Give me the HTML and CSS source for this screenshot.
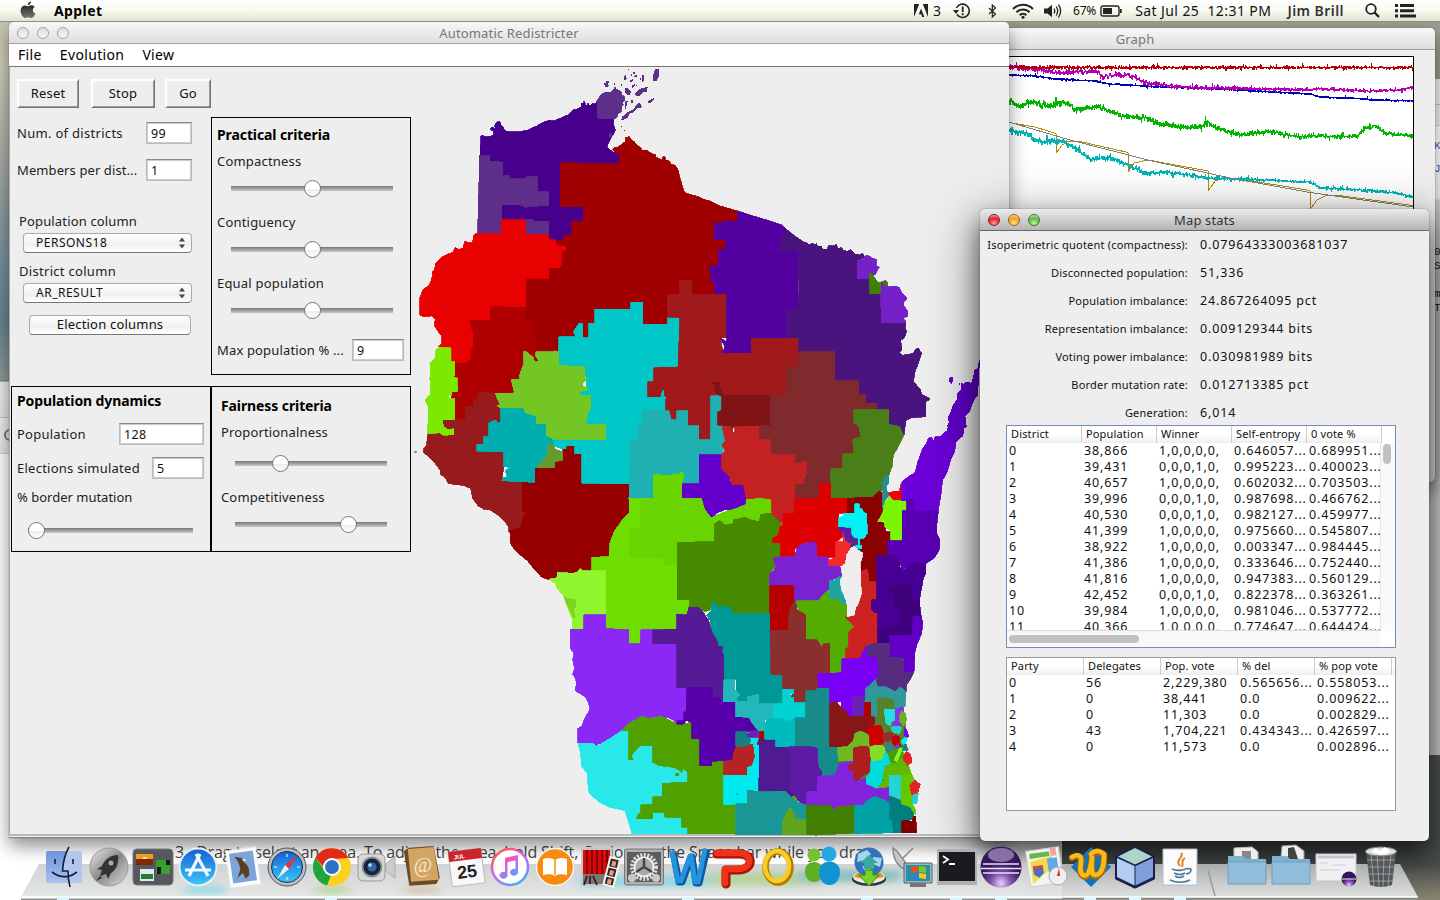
FILE: index.html
```html
<!DOCTYPE html>
<html lang="en">
<head>
<meta charset="utf-8">
<title>Applet</title>
<link rel="stylesheet" href="styles.css">
</head>
<body>
<div class="desktop">
  <div class="back-left"><i class="knob-ring"></i></div>
  <div class="back-doc">3.&nbsp; Drag to select an area. To adjust the area, hold Shift, Option, or the Space bar while you drag</div>
  <div class="back-right"><span class="b1">K</span><span class="b1">J</span><span class="b2">0</span><span class="b3">S</span><span class="b4">m</span><span class="b5">T</span></div>

  <section class="window graph-window">
    <header class="titlebar idle">Graph</header>
    <svg class="graph" id="graph" viewBox="1000 56 414 400" width="414" height="400"></svg>
  </section>

  <section class="window applet">
    <header class="titlebar idle"><span class="lights"><i></i><i></i><i></i></span>Automatic Redistricter</header>
    <nav class="menu"><span>File</span><span>Evolution</span><span>View</span></nav>
    <div class="canvas">
      <div class="controls">
        <div class="toolbar"><b class="reset">Reset</b><b class="stop">Stop</b><b class="go">Go</b></div>
        <div class="panels">
          <div class="setup">
            <div class="row"><label>Num. of districts</label><span class="field w46">99</span></div>
            <div class="row second"><label>Members per dist...</label><span class="field w46">1</span></div>
            <label class="collabel first">Population column</label>
            <div class="select">PERSONS18<svg width="6" height="12" viewBox="0 0 6 12"><path d="M0 4.500L3 .5l3 4zM0 7.500l3 4 3-4z" fill="#444"/></svg></div>
            <label class="collabel">District column</label>
            <div class="select">AR_RESULT<svg width="6" height="12" viewBox="0 0 6 12"><path d="M0 4.500L3 .5l3 4zM0 7.500l3 4 3-4z" fill="#444"/></svg></div>
            <div class="push">Election columns</div>
          </div>
          <div class="panel practical">
            <h3>Practical criteria</h3>
            <div class="group"><label>Compactness</label><div class="slider"><i style="left:50%"></i></div></div>
            <div class="group"><label>Contiguency</label><div class="slider"><i style="left:50%"></i></div></div>
            <div class="group"><label>Equal population</label><div class="slider"><i style="left:50%"></i></div></div>
            <div class="row max"><label>Max population % ...</label><span class="field w52">9</span></div>
          </div>
          <div class="panel dynamics">
            <h3>Population dynamics</h3>
            <div class="row"><label>Population</label><span class="field w85">128</span></div>
            <div class="row"><label>Elections simulated</label><span class="field w52">5</span></div>
            <label class="lbl">% border mutation</label>
            <div class="slider"><i style="left:5%"></i></div>
          </div>
          <div class="panel fairness">
            <h3>Fairness criteria</h3>
            <label class="l1">Proportionalness</label>
            <div class="slider"><i style="left:30%"></i></div>
            <label class="l2">Competitiveness</label>
            <div class="slider s2"><i style="left:74.500%"></i></div>
          </div>
        </div>
      </div>
      <svg class="map" id="map" viewBox="411 67 597 769" width="597" height="769" shape-rendering="crispEdges">
        <!-- north-west counties -->
        <g transform="translate(410 60) scale(.33333)">
          <polygon fill="#46008b" points="213,227 222,227 226,231 240,229 250,225 252,214 240,208 246,202 256,205 254,196 262,185 270,186 274,196 280,200 282,208 290,214 320,216 352,211 380,198 405,184 420,181 430,183 450,175 470,166 475,165 490,150 500,147 515,140 513,130 522,130 522,122 528,138 534,130 540,138 548,130 555,132 562,122 562,177 612,177 610,190 616,212 604,232 600,240 590,262 604,272 612,278 630,270 630,320 453,320 453,441 522,441 522,484 486,484 486,527 462,527 462,543 417,543 417,484 274,484 274,521 205,521 205,480 210,287"/>
          <polygon fill="#5e2e8b" points="210,288 240,288 240,303 279,307 279,348 300,348 300,356 348,356 348,351 384,351 384,396 417,396 417,437 352,439 348,444 342,439 330,435 276,435 276,480 274,521 204,521 204,478 207,478 207,366 210,366"/>
          <polygon fill="#5e2e8b" points="346,480 372,480 372,484 417,484 417,525 346,525"/>
          <polygon fill="#5e2e8b" points="562,122 572,104 585,97 605,96 615,82 618,88 630,93 636,99 634,106 642,108 645,120 637,128 640,135 635,140 634,155 625,160 620,172 613,177 575,177 562,172"/>
          <path fill="#5e2e8b" d="M582 70l6-2 2-6h8v6l-4 4 4 6-12 4zM730 42l6-14h11v20l-8 16h-10zM675 100l10-10 10-6 18-3-2 14-14 3-6 8-12 3zM644 85l8-3 12 14-6 10-10-3-4-8zM636 170l10-6 8-8 14-6 12-16 6-6 8 8 2 6-14 2-14 14-8 2-6 12-14 8h-6zM714 122l8-2 8-6 2 4-10 10-8 2zM645 125l9-4-4 16-3 10h-3zM642 48l6-2 2 12-6 6zM654 26h3v4h-3zM662 46l4-6v8zM670 36h5v6h-5zM672 48l8-4v6l-8 2zM697 46l6-2v12l-4 10h-2zM658 62l10-4v6l-8 4zM666 76l8-4v4l-8 10zM678 74h4v4h-4zM688 56l4-2v6zM612 70h3v4h-3zM634 72h3v6h-3zM716 68h2v5h-2zM662 120h6v10h-6zM596 220l10-2v10l-8 6z"/>
          <path fill="#a00000" d="M633 198h3v3h-3zM642 210h3v3h-3z"/>
          <polygon fill="#a00000" points="453,309 505,309 505,311 630,311 630,272 618,282 608,268 614,262 622,262 640,249 648,245 648,236 644,230 652,234 657,229 663,236 664,242 670,242 682,256 690,262 698,271 712,270 718,276 730,282 738,284 738,292 752,298 754,304 758,290 766,290 766,300 778,302 782,312 796,316 806,334 808,348 814,366 818,382 824,398 842,404 865,410 882,418 900,423 930,438 983,453 983,485 983,720 846,720 846,950 700,950 300,950 300,900 346,741 346,655 417,655 417,540 435,543 462,543 462,527 486,527 486,484 522,484 522,441 453,441"/>
          <polygon fill="#ae0000" points="177,780 240,780 240,738 287,738 287,741 346,741 346,784 360,786 366,815 378,828 380,890 340,950 320,1010 160,1090 120,1090 130,900 180,900"/>
          <polygon fill="#e90000" points="195,521 274,521 274,480 346,480 346,525 417,525 417,540 435,540 440,555 462,559 468,558 466,572 455,573 453,595 456,610 450,622 438,624 417,622 417,655 348,655 346,741 287,741 287,738 240,738 240,780 177,780 183,810 188,815 188,858 182,870 183,895 174,896 170,908 125,906 125,866 86,860 95,850 96,830 85,815 75,800 73,785 78,780 65,768 40,770 30,765 30,712 38,690 58,675 62,665 68,645 66,636 74,630 76,612 84,602 96,590 115,582 130,576 136,562 145,568 158,566 165,543 175,548 188,548 190,530"/>
        </g>
        <!-- west and centre -->
        <g transform="translate(410 330) scale(.33333)">
          <polygon fill="#00c6c8" points="400,300 880,300 860,440 660,460 520,450 515,372 420,345"/>
          <polygon fill="#971a1c" points="53,312 102,290 98,270 168,270 168,230 192,228 192,210 205,205 205,186 255,190 272,235 272,278 240,278 282,365 282,410 275,450 339,457 339,545 352,545 348,555 340,560 335,588 297,606 295,590 285,575 270,560 240,540 220,537 205,528 188,506 182,475 160,466 130,463 115,460 105,442 92,434 90,420 75,400 58,383 40,366 42,355 50,345"/>
          <polygon fill="#7bea00" points="90,52 123,54 123,96 134,96 134,135 128,139 142,145 143,184 125,185 126,195 112,196 120,205 134,207 134,268 98,270 98,278 102,290 115,299 131,296 131,314 98,316 90,308 53,312 52,290 55,280 55,230 46,212 50,203 60,195 62,155 57,145 62,140 60,100 70,90 78,80 78,60"/>
          <polygon fill="#960000" points="375,412 435,412 435,392 458,390 458,358 470,358 470,348 495,348 495,372 519,372 519,460 658,462 658,548 640,565 632,580 612,605 600,640 600,670 594,682 546,682 546,725 505,732 441,732 436,748 415,748 395,742 380,725 365,708 352,692 325,670 305,648 300,632 302,615 297,602 333,592 340,560 352,543 339,545 339,457 375,457"/>
          <polygon fill="#00c6c8" points="555,-63 663,-63 663,-84 699,-84 699,-18 774,-18 774,-39 810,-39 810,95 804,111 732,113 732,156 714,156 714,200 745,202 760,180 767,200 770,243 697,243 697,285 660,330 660,462 585,462 585,460 516,460 516,372 495,372 495,348 470,348 458,358 430,345 430,329 588,329 588,285 525,285 530,245 542,238 542,197 508,195 508,183 530,180 525,110 447,107 447,21 497,20 490,5 505,-18 519,-20 519,23 537,23 537,-20 555,-20"/>
          <polygon fill="#73c623" points="342,64 350,66 370,82 374,95 386,94 378,80 378,66 430,66 432,62 447,66 447,107 525,110 524,135 532,145 518,160 518,170 532,172 530,182 508,184 510,195 542,197 542,238 533,245 530,275 524,285 588,285 588,329 415,327 408,315 408,283 378,283 378,262 352,255 342,240 272,235 262,228 270,222 255,190 310,190 313,186 306,160 306,148 330,148 328,136 342,100"/>
          <polygon fill="#00aeb0" points="272,235 340,237 345,250 378,260 378,283 408,283 408,318 430,330 430,345 413,345 410,375 385,410 375,412 375,457 275,452 278,444 292,440 286,422 302,412 282,410 282,366 201,363 201,343 220,343 220,320 237,320 237,278 258,270 260,278 272,278"/>
          <polygon fill="#669a30" points="415,343 430,343 435,358 458,365 458,390 435,395 435,413 383,413 388,400 412,375"/>
          <polygon fill="#a01a1c" points="774,-108 810,-108 810,-150 846,-150 846,-108 951,-108 951,24 930,24 940,68 1023,68 1023,24 1167,24 1167,112 1131,112 1131,197 936,197 903,197 903,330 867,330 867,288 833,288 833,243 801,243 801,270 783,270 767,243 767,200 714,200 714,156 732,156 732,113 804,111 810,-39 774,-39"/>
          <path fill="#00c6c8" d="M753 202v-10l6-12h3v16l5 4v6h-14z"/>
          <polygon fill="#1fb0b1" points="697,243 778,243 783,270 801,270 801,243 833,243 833,288 867,288 867,330 903,330 903,198 936,198 936,243 924,245 924,285 936,288 948,330 936,375 867,375 867,461 817,461 817,430 765,438 730,432 730,507 657,505 660,330 685,330 685,285 697,285"/>
          <polygon fill="#6edd00" points="657,505 730,507 730,432 750,434 765,438 808,432 812,427 822,430 817,461 817,504 876,504 880,530 905,562 960,540 1005,525 1010,505 1050,503 1085,508 1085,551 1050,553 1048,575 1005,562 970,583 915,580 912,635 801,637 801,780 837,790 837,850 801,855 801,897 693,900 693,941 657,941 657,900 588,897 588,723 546,722 546,682 597,680 600,640 612,605 640,565 658,548"/>
          <polygon fill="#68d400" points="693,512 720,512 730,507 730,432 750,434 765,438 808,432 812,427 822,430 817,461 817,504 876,504 880,530 905,562 960,540 1005,525 1010,505 1050,503 1085,508 1085,551 1050,553 1048,575 1005,562 970,583 915,580 912,635 801,637 801,705 765,705 765,685 745,682 660,682 657,595 693,595"/>
        </g>
        <!-- north-east -->
        <g transform="translate(700 180) scale(.33333)">
          <polygon fill="#5200a0" points="113,93 130,98 160,108 200,120 245,135 262,150 245,190 235,212 294,212 294,340 297,345 297,385 261,388 261,474 153,474 153,518 66,518 75,500 58,472 78,484 81,474 81,342 45,342 45,303 28,300 38,278 28,275 30,260 57,255 55,210 75,208 77,180 45,180 42,130 65,128 85,120 90,125 113,125"/>
          <path fill="#a00000" d="M60 182h16v26h-8l-8-12z"/>
          <polygon fill="#4a147e" points="262,150 285,168 310,185 322,190 330,196 335,188 345,195 350,190 352,200 364,198 368,208 382,208 386,196 406,198 408,192 414,206 424,202 430,210 442,214 452,208 465,222 480,225 486,220 495,230 472,245 472,297 510,297 510,342 543,342 546,429 618,429 615,445 620,455 612,475 602,480 606,510 598,518 608,526 640,520 645,510 654,503 665,520 655,550 645,575 640,605 662,628 664,642 690,655 686,662 678,664 678,710 632,714 618,722 615,740 612,765 604,755 600,740 567,733 567,690 531,690 531,670 498,670 498,645 477,645 477,603 405,603 405,516 297,516 297,474 261,474 261,388 297,385 294,212 235,212 245,195 245,175"/>
          <polygon fill="#7520c8" points="472,243 482,238 490,240 494,228 508,227 516,235 530,238 528,256 538,262 530,275 525,285 508,280 508,297 472,297"/>
          <polygon fill="#7520c8" points="543,305 554,305 556,316 570,320 580,318 598,322 605,338 622,355 612,365 612,378 624,395 624,408 610,414 618,425 615,429 546,429 543,380"/>
          <polygon fill="#408000" points="507,282 514,278 525,295 535,308 545,308 556,300 563,308 563,317 555,316 551,305 543,310 543,342 510,342"/>
          <polygon fill="#801414" points="66,648 213,648 213,738 136,738 130,742 100,740 96,752 103,762 92,758 90,742 66,736 54,735 54,695 66,690"/>
          <path fill="#801414" d="M33 606h26v14l10 14v14h-12l-12-12v-18l-12-8z"/>
          <polygon fill="#7f2a2c" points="297,516 405,516 405,603 477,603 477,645 498,645 498,670 531,670 531,690 462,690 464,706 472,710 482,770 457,780 462,820 429,822 429,867 393,867 393,912 358,912 358,955 285,955 285,912 312,910 320,845 285,850 285,825 213,825 213,780 177,780 177,738 213,738 213,648 261,648 261,562 297,562"/>
          <polygon fill="#4a7f17" points="462,690 567,690 567,733 600,740 604,755 612,765 600,790 592,805 580,825 576,860 567,885 567,888 548,912 548,930 530,940 520,955 488,957 442,953 393,953 393,867 429,867 429,822 462,822 462,800 457,780 466,775 482,772 478,740 462,730"/>
          <path fill="#6200cc" d="M840 538l-6 14v12l-12 6-2 20-6 18-16-2-6 6-8-4-2 20-10 12-2 18-12 18-6 18-8 16 2 18-6 30 6 30 16 12 12-20 16-12 2-22 8-6-4-32 14-12 6-20 8-18 10-10zM747 594l6-4 2 2 2-4 2 16-4 8-8-6zM776 610h3v5h-3zM742 736h3v4h-3z"/>
        </g>
        <!-- Winnebago and Fox valley -->
        <g transform="translate(700 430) scale(.33333)">
          <polygon fill="#8b0000" points="442,205 550,200 545,275 575,340 535,460 500,440 475,360 440,350"/>
          <polygon fill="#6500cc" points="-3,75 66,75 66,118 78,122 90,140 90,155 105,162 130,163 137,205 136,222 110,232 90,240 75,238 50,250 35,262 25,250 15,235 6,204 -53,204 -53,161 -3,161"/>
          <polygon fill="#478a00" points="45,280 60,272 75,285 100,281 100,270 135,262 155,270 178,275 182,253 213,250 225,262 245,278 238,300 235,315 218,326 218,338 243,340 243,380 220,385 225,410 210,430 210,550 96,550 96,532 50,532 40,515 30,540 15,545 0,535 -33,535 -33,510 -69,510 -69,337 42,335"/>
          <polygon fill="#c42222" points="66,-12 90,-12 96,0 103,12 105,-10 177,-12 177,30 213,30 213,75 285,75 285,100 298,100 310,94 320,95 320,133 312,133 312,160 285,162 285,250 250,250 245,280 215,250 215,208 180,202 140,207 130,163 95,162 90,140 66,118 66,75 75,60 66,45 76,32"/>
          <polygon fill="#de0000" points="285,205 358,205 358,162 393,162 393,205 442,205 442,250 417,250 417,292 430,318 408,337 408,382 351,380 351,337 320,337 285,355 285,380 243,380 243,338 218,338 217,325 235,315 240,290 248,285 250,250 285,250"/>
          <polygon fill="#8b0000" points="442,205 460,208 488,205 515,207 530,190 540,182 553,195 553,210 545,240 533,270 555,280 556,305 572,305 572,333 563,333 563,375 530,378 533,455 507,455 503,418 480,425 482,395 488,375 470,350 480,330 440,300"/>
          <polygon fill="#7a22cf" points="351,337 351,380 385,382 385,405 415,405 425,420 425,440 388,452 388,480 372,490 358,512 282,512 282,468 210,468 210,428 220,425 227,410 220,385 243,380 285,380 290,355 300,345 320,340 325,337"/>
          <polygon fill="#f52828" points="428,315 437,318 438,332 455,338 452,352 440,380 437,408 385,407 388,390 408,382 408,335 430,335"/>
          <polygon fill="#5c1ea8" points="417,292 458,292 460,312 472,322 450,340 438,330 430,308 420,305"/>
          <polygon fill="#562c80" points="452,328 472,320 474,348 450,352 455,342"/>
          <polygon fill="#00f2f5" points="465,222 477,222 478,235 488,238 490,248 500,250 502,310 492,325 480,326 480,345 486,346 485,357 468,355 468,346 475,345 475,325 462,322 455,312 455,292 417,290 417,262 430,260 430,250 465,250"/>
          <polygon fill="#1ea4a4" points="388,452 405,450 420,438 425,480 438,500 440,525 425,522 415,508 388,508"/>
          <polygon fill="#55ac00" points="290,512 358,512 365,498 385,480 388,508 415,508 425,522 440,525 442,555 450,572 460,580 458,592 447,605 447,650 438,687 426,687 426,728 390,728 390,642 368,645 365,655 355,630 318,630 318,555 300,552 295,535 290,525"/>
          <polygon fill="#ce2222" points="480,425 503,418 507,455 533,455 533,640 500,642 498,660 486,685 438,687 438,655 447,650 447,605 462,590 450,575 435,562 465,555 470,530 485,490"/>
          <polygon fill="#eee" points="455,352 465,350 470,358 488,368 486,385 480,400 482,420 482,460 485,490 475,520 463,540 463,555 442,560 442,525 438,510 425,480 420,450 427,440 424,410 437,400 440,375"/>
          <polygon fill="#b60000" points="210,468 282,468 282,515 272,530 267,550 267,600 210,602"/>
          <polygon fill="#2a8a8c" points="555,137 567,137 567,160 558,168 560,180 568,195 553,215 553,240 546,232 548,185 546,160"/>
          <polygon fill="#f50000" points="565,190 580,184 598,184 603,163 605,215 580,212"/>
          <polygon fill="#7cf500" points="568,200 580,212 620,213 620,243 607,243 607,333 573,330 572,302 555,292 555,272 533,275 550,245 552,225"/>
          <polygon fill="#6c00d8" points="605,155 625,140 645,128 652,100 660,78 668,55 680,40 685,25 695,22 700,35 705,20 720,20 738,2 745,25 755,35 768,42 762,70 752,90 740,130 728,150 722,200 715,240 642,241 642,208 605,213"/>
          <polygon fill="#5a00b4" points="620,208 642,208 642,243 715,241 710,290 710,310 720,330 718,358 705,382 680,400 640,405 605,418 597,380 563,375 563,333 607,333 607,243 620,243"/>
          <polygon fill="#480094" points="530,378 563,375 597,380 600,412 610,420 640,400 678,400 678,430 670,445 662,490 658,515 663,555 668,578 640,616 533,640 533,550 520,545 513,535 515,510 530,510"/>
          <polygon fill="#3f007c" points="565,465 583,475 605,462 635,462 635,508 658,510 658,530 660,560 640,560 638,616 570,616 570,638 533,638 533,595 565,592 603,585 603,535 583,535 583,490 565,480"/>
        </g>
        <!-- south-west -->
        <g transform="translate(560 600) scale(.33333)">
          <polygon fill="#00eaee" points="492,400 600,380 625,470 600,570 492,560"/>
          <polygon fill="#90f52c" points="-32,-62 -20,-66 -9,-65 -9,-83 10,-82 35,-80 50,-82 60,-94 70,-88 96,-88 138,-87 138,45 72,45 72,87 36,87 38,60 30,40 20,15 12,-10 -8,-35 -15,-50"/>
          <polygon fill="#7ed321" points="12,-10 20,-6 47,0 48,22 40,28 46,55 38,50 30,30 20,12"/>
          <polygon fill="#009896" points="440,45 455,30 455,8 467,8 467,20 480,18 515,22 515,41 630,41 630,165 634,222 672,226 669,312 597,312 597,285 562,290 562,305 530,305 528,240 492,240 492,165 475,140 457,100 450,60"/>
          <polygon fill="#8c28f5" points="31,88 72,87 72,45 138,45 138,87 162,87 207,90 207,131 243,131 243,90 279,90 279,131 351,131 351,264 381,264 378,340 372,362 350,370 340,360 320,350 300,400 205,400 155,415 150,420 125,430 115,432 108,440 100,430 54,430 54,385 66,378 72,360 90,327 85,308 75,290 62,282 45,272 50,250 46,235 38,222 44,205 38,180 42,160 31,145"/>
          <polygon fill="#561a96" points="387,22 415,22 430,35 435,45 445,60 457,100 470,120 475,140 488,138 485,155 492,165 492,240 488,300 490,310 480,311 480,293 457,293 457,264 351,264 351,131 279,131 279,90 322,88 351,87 351,42 380,45"/>
          <polygon fill="#28e8ea" points="54,430 100,430 108,440 125,430 155,412 185,392 207,393 300,430 384,500 384,702 216,702 210,680 195,632 175,627 150,622 120,608 110,600 90,582 85,570 82,520 65,500 62,460"/>
          <polygon fill="#50a000" points="185,390 205,370 228,358 245,348 265,355 285,352 305,348 320,357 345,368 352,375 375,370 395,368 396,417 420,417 420,497 456,497 456,484 492,484 492,612 527,612 527,702 384,702 384,682 366,682 366,652 315,652 315,637 279,637 279,657 228,657 235,642 243,640 243,615 279,615 279,590 307,590 307,550 384,547 384,518 370,505 365,518 350,505 330,500 300,497 279,488 279,437 240,437 215,465 218,480 207,480 207,393"/>
          <polygon fill="#50a000" points="348,520 357,520 357,528 348,528"/>
          <polygon fill="#5500ab" points="381,264 456,264 457,293 480,293 485,310 492,306 528,306 528,350 568,352 575,368 594,390 560,395 528,395 528,440 520,480 456,484 456,497 420,497 420,417 396,417 395,368 380,362 370,373 350,372 352,362 372,360 372,336 378,336"/>
          <polygon fill="#22b8bb" points="492,240 525,240 525,270 540,285 530,295 532,305 562,303 562,290 597,283 597,312 642,312 642,357 615,360 612,405 594,390 575,368 568,352 528,350 528,306 490,306"/>
          <polygon fill="#00bbbc" points="615,370 625,355 655,355 700,357 700,440 648,440 645,417 615,415"/>
          <polygon fill="#00eaee" points="492,525 561,525 580,470 580,432 570,425 590,420 590,435 615,445 622,480 612,530 597,535 597,570 561,572 561,612 492,614"/>
          <polygon fill="#b82222" points="520,460 528,440 548,438 560,432 578,434 583,470 575,495 561,500 561,525 492,525 492,484 518,482"/>
          <polygon fill="#167f80" points="528,395 562,395 562,410 572,420 566,435 548,440 528,438"/>
          <polygon fill="#6e20b4" points="560,402 580,392 594,392 596,412 565,412"/>
          <polygon fill="#501a90" points="597,432 600,420 620,416 645,417 648,440 700,440 700,575 597,575 597,535 614,530 614,495 622,480 612,445"/>
          <polygon fill="#b40000" points="597,393 612,395 614,425 605,435 592,432 598,415"/>
          <path fill="#00bbbc" d="M528 579h6v6h-6z"/>
        </g>
        <!-- south-east -->
        <g transform="translate(760 620) scale(.33333)">
          <polygon fill="#55822b" points="320,230 425,262 436,310 436,370 425,400 440,430 440,560 240,560 230,380"/>
          <polygon fill="#8b2e2e" points="30,33 87,33 87,-15 92,-40 105,-60 112,-30 138,-15 138,60 172,60 185,82 190,72 210,72 210,158 175,162 178,200 165,213 138,213 138,249 102,248 102,235 92,228 102,220 102,208 69,207 69,165 33,163"/>
          <polygon fill="#00d2d2" points="69,207 102,208 102,220 90,222 92,232 102,234 102,248 138,249 138,292 100,293 90,305 80,300 60,295 42,293 42,252 69,252"/>
          <polygon fill="#178a8a" points="138,213 165,213 175,204 210,204 210,380 235,382 233,425 238,440 228,462 210,470 185,470 185,455 172,420 172,385 155,381 105,381 105,293 138,293"/>
          <polygon fill="#6000c6" points="390,48 455,45 458,25 458,0 458,-10 480,-12 488,10 485,40 470,75 465,95 462,155 430,157 432,115 390,112"/>
          <polygon fill="#562c80" points="320,75 352,70 390,70 390,112 422,112 432,125 430,157 462,157 450,180 440,195 438,215 420,203 415,215 354,200 340,170 354,165 354,118 315,112"/>
          <polygon fill="#7a00f5" points="246,117 300,117 315,82 320,110 352,114 354,165 340,185 320,205 315,228 280,230 280,290 262,290 260,275 245,265 243,245 210,248 210,204 175,204 172,162 246,158"/>
          <polygon fill="#6a22b5" points="278,230 315,226 315,290 278,290"/>
          <polygon fill="#55822b" points="351,230 405,232 412,262 432,265 432,350 370,345 345,315 342,293 351,290"/>
          <polygon fill="#309898" points="318,205 335,190 347,178 350,200 375,200 405,215 418,202 428,205 438,215 435,260 428,258 415,268 405,262 405,240 380,232 351,230 351,290 332,290 332,245 315,245"/>
          <polygon fill="#b60000" points="315,247 333,247 333,290 315,290"/>
          <polygon fill="#8a1717" points="210,248 230,246 245,265 260,275 262,290 342,290 345,310 328,322 322,345 300,335 285,345 280,362 262,380 210,380"/>
          <polygon fill="#6eb821" points="285,340 300,333 318,340 330,352 330,378 305,380 280,380 280,423 235,422 233,382 262,380 280,362"/>
          <polygon fill="#cf0000" points="325,325 335,312 345,318 362,315 370,340 370,370 350,378 330,375 328,348 322,335"/>
          <polygon fill="#84de28" points="330,382 345,375 370,378 378,390 368,422 332,422"/>
          <polygon fill="#501a90" points="-3,360 48,358 48,381 86,381 95,450 88,490 110,545 75,515 -3,515"/>
          <polygon fill="#00bbbc" points="15,320 30,298 60,295 90,305 105,293 105,381 48,381 48,358 15,357"/>
          <polygon fill="#5c1aa5" points="86,381 155,381 172,385 172,420 176,440 185,455 185,470 174,470 174,513 141,515 140,556 110,540 88,500 90,465 95,450"/>
          <polygon fill="#8224db" points="238,430 280,423 265,440 282,455 288,480 318,475 320,495 360,503 388,500 388,552 372,535 345,532 310,555 230,560 220,570 212,556 141,555 141,515 174,513 174,470 225,465"/>
          <polygon fill="#ad1e1e" points="280,385 305,378 325,380 332,422 330,455 305,470 292,483 282,478 282,455 265,445 268,435 280,430"/>
          <polygon fill="#60b800" points="370,445 388,435 392,395 440,400 445,435 455,465 423,466 388,466 388,500 355,503 372,480"/>
          <polygon fill="#00dcdf" points="332,424 368,422 370,405 385,400 392,430 372,440 365,485 350,505 318,490 320,470 332,455"/>
          <polygon fill="#1a9898" points="-73,645 -73,552 -39,552 -39,510 -3,515 75,514 110,545 141,556 141,600 69,600 69,645"/>
          <polygon fill="#60a41c" points="69,600 78,580 92,560 98,575 105,580 105,600 141,600 141,645 69,645"/>
          <path fill="#60a41c" d="M96 528l12 2 4 14-8-2z"/>
          <polygon fill="#407f00" points="141,556 212,556 220,570 235,560 285,556 303,575 300,590 288,600 292,612 285,640 250,641 170,645 168,648 165,645 141,645"/>
          <polygon fill="#00a2a4" points="285,556 310,555 320,542 345,530 372,540 388,550 390,600 410,605 415,638 285,641"/>
          <polygon fill="#007f80" points="390,528 405,530 425,550 440,555 462,572 462,598 426,600 426,638 400,638 397,600 390,600"/>
          <polygon fill="#7f0000" points="426,602 440,600 455,605 460,590 467,588 470,638 426,638"/>
          <polygon fill="#24d4d6" points="388,466 423,466 423,538 388,525"/>
          <polygon fill="#64c800" points="423,466 455,462 465,485 450,500 465,520 456,550 467,570 466,585 450,560 425,552"/>
          <path fill="#df2626" d="M430 405l10-12 14 10 2 26-14 8-12-16zM448 495l16-16 18 14-8 28-20 4z"/>
          <polygon fill="#24cfd2" points="460,525 475,520 470,552 456,548"/>
          <polygon fill="#8b30ea" points="405,268 430,260 430,305 420,318 400,318 400,305"/>
          <polygon fill="#24dfe0" points="372,267 405,268 405,300 395,305 390,318 378,310"/>
          <polygon fill="#6cb020" points="418,290 425,272 435,280 440,300 430,318 420,305"/>
          <polygon fill="#28cfd0" points="392,322 408,318 425,322 420,340 400,338"/>
          <polygon fill="#7a00f5" points="432,323 440,328 446,350 436,355"/>
          <polygon fill="#963030" points="368,345 385,335 400,340 395,362 370,365"/>
          <path fill="#c40000" d="M395 352l12-8 12 6v20l-14 8-8-6zM416 372h8v8h-8z"/>
          <path fill="#8b30ea" d="M400 385l14-10 8 4-12 12z"/>
          <polygon fill="#308585" points="377,372 395,370 400,385 390,400 377,392"/>
          <polygon fill="#48a000" points="385,400 400,392 425,380 428,410 405,430 392,428"/>
          <polygon fill="#82f52a" points="403,420 418,386 428,383 412,425"/>
          <polygon fill="#00f5f5" points="422,365 438,350 442,358 434,375"/>
          <polygon fill="#148080" points="428,378 438,372 445,390 430,392"/>
        </g>
      </svg>
      <i class="speck"></i>
    </div>
  </section>

  <section class="window stats">
    <header class="titlebar active"><span class="lights color"><i></i><i></i><i></i></span>Map stats</header>
    <dl>
      <dt>Isoperimetric quotent (compactness):</dt><dd>0.07964333003681037</dd>
      <dt>Disconnected population:</dt><dd>51,336</dd>
      <dt>Population imbalance:</dt><dd>24.867264095 pct</dd>
      <dt>Representation imbalance:</dt><dd>0.009129344 bits</dd>
      <dt>Voting power imbalance:</dt><dd>0.030981989 bits</dd>
      <dt>Border mutation rate:</dt><dd>0.012713385 pct</dd>
      <dt>Generation:</dt><dd>6,014</dd>
    </dl>
    <div class="tbl t1">
      <div class="tr th"><span>District</span><span>Population</span><span>Winner</span><span>Self-entropy</span><span>0 vote %</span></div>
      <div class="rows">
        <div class="tr"><span>0</span><span>38,866</span><span>1,0,0,0,0,</span><span>0.646057...</span><span>0.689951...</span></div>
        <div class="tr"><span>1</span><span>39,431</span><span>0,0,0,1,0,</span><span>0.995223...</span><span>0.400023...</span></div>
        <div class="tr"><span>2</span><span>40,657</span><span>1,0,0,0,0,</span><span>0.602032...</span><span>0.703503...</span></div>
        <div class="tr"><span>3</span><span>39,996</span><span>0,0,0,1,0,</span><span>0.987698...</span><span>0.466762...</span></div>
        <div class="tr"><span>4</span><span>40,530</span><span>0,0,0,1,0,</span><span>0.982127...</span><span>0.459977...</span></div>
        <div class="tr"><span>5</span><span>41,399</span><span>1,0,0,0,0,</span><span>0.975660...</span><span>0.545807...</span></div>
        <div class="tr"><span>6</span><span>38,922</span><span>1,0,0,0,0,</span><span>0.003347...</span><span>0.984445...</span></div>
        <div class="tr"><span>7</span><span>41,386</span><span>1,0,0,0,0,</span><span>0.333646...</span><span>0.752440...</span></div>
        <div class="tr"><span>8</span><span>41,816</span><span>1,0,0,0,0,</span><span>0.947383...</span><span>0.560129...</span></div>
        <div class="tr"><span>9</span><span>42,452</span><span>0,0,0,1,0,</span><span>0.822378...</span><span>0.363261...</span></div>
        <div class="tr"><span>10</span><span>39,984</span><span>1,0,0,0,0,</span><span>0.981046...</span><span>0.537772...</span></div>
        <div class="tr"><span>11</span><span>40,366</span><span>1,0,0,0,0,</span><span>0.774647...</span><span>0.644424...</span></div>
      </div>
      <div class="hbar"><i></i></div>
      <div class="vbar"><i></i></div>
    </div>
    <div class="tbl t2">
      <div class="tr th"><span>Party</span><span>Delegates</span><span>Pop. vote</span><span>% del</span><span>% pop vote</span></div>
      <div class="rows">
        <div class="tr"><span>0</span><span>56</span><span>2,229,380</span><span>0.565656...</span><span>0.558053...</span></div>
        <div class="tr"><span>1</span><span>0</span><span>38,441</span><span>0.0</span><span>0.009622...</span></div>
        <div class="tr"><span>2</span><span>0</span><span>11,303</span><span>0.0</span><span>0.002829...</span></div>
        <div class="tr"><span>3</span><span>43</span><span>1,704,221</span><span>0.434343...</span><span>0.426597...</span></div>
        <div class="tr"><span>4</span><span>0</span><span>11,573</span><span>0.0</span><span>0.002896...</span></div>
      </div>
    </div>
  </section>

  <header class="menubar">
    <svg class="apple" width="16" height="18" viewBox="0 0 16 18"><path d="M11 .5c.1 1.700-1.500 3.600-3.200 3.500C7.600 2.400 9.300.7 11 .5zM8 5.200c.8 0 1.800-.9 3.400-.9 1.400 0 2.600.7 3.300 1.700-2.800 1.700-2.300 5.400.6 6.500-.6 1.800-2.200 4.500-3.800 4.500-1.200 0-1.700-.8-3.200-.8s-2 .8-3.200.8C3 17 .6 13.200.6 9.800c0-3.300 2-5.400 4.200-5.400 1.400 0 2.400.8 3.200.8z" fill="url(#ap)"/><defs><linearGradient id="ap" x2="0" y2="1"><stop offset="0" stop-color="#111"/><stop offset="1" stop-color="#777"/></linearGradient></defs></svg>
    <strong>Applet</strong>
    <div class="tray">
      <svg width="14" height="13" viewBox="0 0 14 13"><path d="M0 0h5.200L0 13zM8.800 0H14v13zM7 4.500L10.300 13H8.200l-1-2.700H4.800z" fill="#222"/></svg>
      <span class="n3">3</span>
      <svg class="tm" width="18" height="16" viewBox="0 0 18 16"><path d="M3.500 5A6.700 6.700 0 1 1 4 11.500" fill="none" stroke="#222" stroke-width="1.600"/><path d="M0 7h6L3 11z" fill="#222"/><path d="M9.700 3.500v5.500M9.700 10.300v2" stroke="#222" stroke-width="1.800"/></svg>
      <svg class="bt" width="9" height="14" viewBox="0 0 9 14"><path d="M1 4l6.500 6L4.300 13V1l3.200 3L1 10" fill="none" stroke="#222" stroke-width="1.200"/></svg>
      <svg class="wf" width="22" height="16" viewBox="0 0 22 16"><g fill="none" stroke="#222" stroke-width="2"><path d="M1 6a14 14 0 0 1 20 0M4.500 9.200a9 9 0 0 1 13 0M7.700 12.200a4.500 4.500 0 0 1 6.600 0"/></g><circle cx="11" cy="14.300" r="1.500" fill="#222"/></svg>
      <svg class="vol" width="18" height="14" viewBox="0 0 18 14"><path d="M0 4.500h3.500L8 .8v12.400L3.500 9.500H0z" fill="#222"/><path d="M10 4.500q1.500 2.500 0 5M12.200 2.500q3 4.500 0 9M14.400.7q4.500 6.300 0 12.600" fill="none" stroke="#222" stroke-width="1.300"/></svg>
      <span class="pct">67%</span>
      <svg class="bat" width="22" height="12" viewBox="0 0 22 12"><rect x="1" y="1" width="18" height="10" rx="2" fill="none" stroke="#222" stroke-width="1.400"/><path d="M3 3h9v6H3zM20 4h1.700v4H20z" fill="#222"/></svg>
      <span class="date">Sat Jul 25&nbsp; 12:31 PM</span>
      <span class="user">Jim Brill</span>
      <svg class="mag" width="15" height="15" viewBox="0 0 15 15"><circle cx="6" cy="6" r="4.800" fill="none" stroke="#222" stroke-width="1.800"/><path d="M9.500 9.500L14 14" stroke="#222" stroke-width="2.400"/></svg>
      <svg class="lst" width="21" height="14" viewBox="0 0 21 14"><path d="M0 0h3v3H0zM5 0h14v3H5zM0 5.300h3v3H0zM5 5.300h14v3H5zM0 10.600h3v3H0zM5 10.600h16v3H5z" fill="#222"/></svg>
    </div>
  </header>

  <footer class="dock">
    <svg class="shelf" viewBox="0 0 1440 60" width="1440" height="60" aria-hidden="true">
      <defs><linearGradient id="sh" x2="0" y2="1"><stop offset="0" stop-color="#c6c9c9" stop-opacity=".8"/><stop offset="1" stop-color="#e4e6e6" stop-opacity=".94"/></linearGradient><filter id="bl" x="-50%" width="200%"><feGaussianBlur stdDeviation="6 3"/></filter></defs>
      <polygon points="39,24 1400,24 1418,57 21,57" fill="url(#sh)"/>
      <g filter="url(#bl)" opacity=".45"><path fill="#40d0e0" d="M580 35h130v12H580zM185 46h40v8h-40z"/><path fill="#90c850" d="M710 32h110v14H710zM316 46h32v8h-32z"/><path fill="#30a0a0" d="M800 30h100v12H800z"/><path fill="#c8a878" d="M405 46h34v8h-34z"/></g>
      <path d="M21 57h1397" stroke="#fff" stroke-width="1.500"/><path d="M21 58.500h1397v1.500H21z" fill="#8d9090"/>
      <path d="M1208 30l7 26" stroke="#9a9d9d" stroke-width="1.500"/>
      <path fill="#dff6ff" d="M57 57h12v3H57zM325 57h12v3h-12zM682 57h12v3h-12zM861 57h12v3h-12zM950 57h12v3h-12zM995 57h12v3h-12zM1084 57h12v3h-12zM1129 57h12v3h-12zM1174 57h12v3h-12z"/>
    </svg>
    <div class="icons">
      <svg viewBox="0 0 44 44"><defs><linearGradient id="f1" x2="0" y2="1"><stop offset="0" stop-color="#6d94dc"/><stop offset="1" stop-color="#a9c1ee"/></linearGradient><linearGradient id="met" x2="1" y2="1"><stop offset="0" stop-color="#eee"/><stop offset=".5" stop-color="#888"/><stop offset="1" stop-color="#ddd"/></linearGradient><linearGradient id="blu" x2="0" y2="1"><stop offset="0" stop-color="#1560d8"/><stop offset="1" stop-color="#3bc8f8"/></linearGradient></defs><rect x="4" y="6" width="36" height="32" rx="2" fill="url(#f1)"/><path d="M25 6h15v32H26c-1-5-1-8-1-12h-5C21 18 22 12 25 6z" fill="#b4c6ec"/><path d="M27 2c-4 7-6 16-6.500 24H26c0 6 .5 10 2 16M10 27c8 6 17 6 25 0M13 14v5M31 14v5" fill="none" stroke="#142038" stroke-width="1.600"/></svg>
      <svg viewBox="0 0 44 44"><circle cx="22" cy="22" r="19" fill="url(#met)" stroke="#999"/><path d="M31 10c-9 0-14 6-16 11l-5 3 5 1-2 6 6-2 2 5 3-6c5-3 8-9 7-18zM13 31l-4 5 6-3z" fill="#333"/><circle cx="24" cy="18" r="2.500" fill="#aaa"/></svg>
      <svg viewBox="0 0 44 44"><rect x="2" y="4" width="40" height="36" rx="4" fill="#55585e" stroke="#777"/><path fill="#f59b22" d="M5 9h17v5H5z"/><path fill="#7a2a08" d="M5 14h17v6H5z"/><path fill="#ffe27a" d="M12 12h4v2h-4z"/><path fill="#38a02c" d="M25 15h14v14H25z"/><path fill="#1a1a1a" d="M26 22h4v7h-4zM35 15h4v5h-4z"/><path fill="#dfe8ea" d="M9 24h14v12H9z"/><path fill="#257d32" d="M10 29h12v5H10z"/></svg>
      <svg viewBox="0 0 44 44"><circle cx="22" cy="22" r="18.500" fill="url(#blu)" stroke="#e8eef4" stroke-width="2"/><path d="M24 9L13 31M20 9l12 22M9 25h26" stroke="#f4f8fc" stroke-width="3.200"/></svg>
      <svg viewBox="0 0 44 44"><g transform="rotate(-8 22 22)"><path d="M7 4h30v37H7z" fill="#fff" stroke="#eee" stroke-width="2" stroke-dasharray="2 1.500"/><path d="M10 7h24v30H10z" fill="#7ea4dc"/><path d="M15 11c6 1 10 3 9 7 4 3 4 9 3 13l-4 3-2-6-6 4 4-8c0-5-1-9-4-13z" fill="#5a4020"/><path d="M22 14l4 1-2 2z" fill="#fff"/></g></svg>
      <svg viewBox="0 0 44 44"><circle cx="22" cy="22" r="19" fill="#b9bec4" stroke="#555"/><circle cx="22" cy="22" r="15.500" fill="url(#blu)" stroke="#234"/><path d="M32 10L20 20l4 4z" fill="#e33"/><path d="M12 34l8-14 4 4z" fill="#eee"/><path d="M22 9v3M22 32v3M9 22h3M32 22h3" stroke="#fff"/></svg>
      <svg viewBox="0 0 44 44"><circle cx="22" cy="22" r="19" fill="#fbd01f"/><path d="M5.500 12.500A19 19 0 0 1 38.500 13L22 14l-7 10z" fill="#e3281c"/><path d="M5.500 12.500L15 26l6 4-4 10.500A19 19 0 0 1 5.500 12.500z" fill="#1fa53c"/><circle cx="22" cy="22" r="9" fill="#fff"/><circle cx="22" cy="22" r="7" fill="#2a74c8"/></svg>
      <svg viewBox="0 0 44 44"><path d="M31 20l10-9v22l-10-8z" fill="#ccc" stroke="#aaa"/><rect x="4" y="9" width="27" height="27" rx="5" fill="#d8d8d8" stroke="#999"/><circle cx="18" cy="22" r="9.500" fill="#16243a" stroke="#8a8f96" stroke-width="2"/><circle cx="18" cy="22" r="4.500" fill="#2f66a8"/><circle cx="16" cy="20" r="1.800" fill="#c0dcf4"/></svg>
      <svg viewBox="0 0 44 44"><g transform="rotate(-4 22 22)"><path d="M6 5l5-3h25l4 32-4 6H9z" fill="#6c4a28"/><path d="M10 3h26l3 33H11z" fill="#d2a563"/></g><text x="24" y="27" class="at">@</text></svg>
      <svg viewBox="0 0 44 44"><g transform="rotate(-7 22 22)"><rect x="6" y="5" width="33" height="35" rx="2" fill="#f8f8f8" stroke="#bbb"/><path d="M6 5h33v10H6z" fill="#c9252b"/><text x="22.500" y="33" class="cal">25</text><text x="11" y="13" class="jul">JUL</text></g></svg>
      <svg viewBox="0 0 44 44"><defs><linearGradient id="it" x1=".2" x2=".8" y2="1"><stop offset="0" stop-color="#fb5c3f"/><stop offset=".4" stop-color="#e05be8"/><stop offset="1" stop-color="#3bb2f8"/></linearGradient></defs><circle cx="22" cy="22" r="18" fill="#fff" stroke="url(#it)" stroke-width="2.500"/><path d="M17 13l13-3v17a4 3.500 0 1 1-2.500-3V15.500L19.500 17v13a4 3.500 0 1 1-2.500-3z" fill="url(#it)"/></svg>
      <svg viewBox="0 0 44 44"><circle cx="22" cy="22" r="18.500" fill="#f98a10" stroke="#f4f4f4" stroke-width="1.500"/><path d="M10 14c5-2 9-1 12 1 3-2 7-3 12-1v16c-5-1-9-1-12 1-3-2-7-2-12-1z" fill="#fff"/><path d="M22 15v15" stroke="#f98a10" stroke-width="1.500"/></svg>
      <svg viewBox="0 0 44 44"><path d="M3 2h31v39H3z" fill="#c7c7c7"/><path d="M5 5h27v24H5z" fill="#d80a0a"/><path d="M9 5v24M14 5v24M19 5v24M24 5v24M29 5v24" stroke="#800" stroke-width="2"/><path d="M5 29h27v10H5z" fill="#777"/><path d="M9 31l-3 9M12 31v8M15 31l4 9" stroke="#311" stroke-width="1.600"/><g transform="rotate(14 34 26)"><path d="M28 12h12v30H28z" fill="#f4f4f4"/><path d="M30 14h8v8h-8zM30 23.500h8v8h-8zM30 33h8v7h-8z" fill="#3a2420"/><path d="M32 16h4v5h-4zM32 25.500h4v5h-4zM32 34.500h4v5h-4z" fill="#dba184"/></g></svg>
      <svg viewBox="0 0 44 44"><rect x="2.500" y="4" width="39" height="36" rx="2" fill="#b0b0b0" stroke="#777"/><path d="M5 7h34v30H5z" fill="#5c5c5c"/><circle cx="22" cy="22" r="12" fill="none" stroke="#ddd" stroke-width="4" stroke-dasharray="2 1.500"/><circle cx="22" cy="22" r="9.500" fill="#aaa" stroke="#eee" stroke-width="2"/><path d="M22 22v-9M22 22l8 5M22 22l-8 5" stroke="#444" stroke-width="2.500"/><circle cx="10" cy="33" r="4" fill="#c8c8c8"/><circle cx="34" cy="33" r="4" fill="#c8c8c8"/></svg>
      <svg viewBox="0 0 44 44"><path d="M6 7l6 30h3l9-25h1l4 26h3L40 4" fill="none" stroke="#0b5799" stroke-width="7" stroke-linejoin="round"/><path d="M5 6l6 30h3l9-25h1l4 26h3L38 4" fill="none" stroke="#2494de" stroke-width="5" stroke-linejoin="round"/></svg>
      <svg viewBox="0 0 44 44"><path d="M5 9h22c16 0 14 16 0 16H14v14" fill="none" stroke="#a81208" stroke-width="9" stroke-linejoin="round" stroke-linecap="round"/><path d="M5 8h21c16 0 14 16 0 16H13v14" fill="none" stroke="#f0321c" stroke-width="6.500" stroke-linejoin="round" stroke-linecap="round"/></svg>
      <svg viewBox="0 0 44 44"><ellipse cx="22" cy="22" rx="12.500" ry="15.500" fill="none" stroke="#b47a04" stroke-width="6.500"/><ellipse cx="21" cy="21" rx="12" ry="15" fill="none" stroke="#fccc24" stroke-width="4.500"/></svg>
      <svg viewBox="0 0 44 44"><circle cx="13" cy="10" r="6.500" fill="#74c232"/><path d="M4 26c0-12 18-12 18 0 0 6-3 11-9 11S4 32 4 26z" fill="#5eb024"/><circle cx="28" cy="9" r="7.500" fill="#24a8e0"/><path d="M18 27c0-14 21-14 21 0 0 7-4 13-10.500 13S18 34 18 27z" fill="#1292d0"/></svg>
      <svg viewBox="0 0 44 44"><ellipse cx="23" cy="34" rx="17" ry="7" fill="#333"/><ellipse cx="23" cy="32" rx="16" ry="6.500" fill="#e5ebe6"/><path d="M8 32q2-5 10-6v8zM38 32q-2-5-10-6v8z" fill="#e69322"/><circle cx="23" cy="17" r="14.500" fill="#3272b8"/><path d="M12 9l9-4 4 4-6 6-8 2zM27 12l9 1-2 9-7-3zM16 21l9 2-4 7z" fill="#a9d5ec"/><path d="M18 24V18h-4l9-8 9 8h-4v6z" fill="#38a8a0"/><path d="M19 25h8v5h6L23 41 13 30h6z" fill="#7ad028" stroke="#378a12"/></svg>
      <svg viewBox="0 0 44 44"><path d="M3 3c0 12 6 22 18 22L7 6zM23 3L12 14" fill="#c7c7c7" stroke="#888" stroke-width="1.500"/><path d="M14 18h28v20H14z" fill="#9fb4be" stroke="#567"/><path d="M16 20h24v16H16z" fill="#2790a8"/><path d="M21 22l7-1v6l-7 1z" fill="#e85020"/><path d="M29 21l7 1v6l-7-1z" fill="#80c828"/><path d="M21 29l7-1v6l-7-1z" fill="#3080e0"/><path d="M29 28l7 1v5l-7-1z" fill="#f8c820"/><path d="M20 38h16v4H20z" fill="#777"/></svg>
      <svg viewBox="0 0 44 44"><path d="M2 4h40v36H2z" fill="#aeb0b2"/><path d="M4 7h36v29H4z" fill="#1a1b1e"/><path d="M8 11l5 3.500-5 3.500M14 19h6" fill="none" stroke="#fff" stroke-width="1.800"/></svg>
      <svg viewBox="0 0 44 44"><defs><radialGradient id="ec" cy=".9"><stop offset="0" stop-color="#e8d4fa"/><stop offset=".5" stop-color="#8050b0"/><stop offset="1" stop-color="#33185c"/></radialGradient></defs><circle cx="22" cy="22" r="20.500" fill="url(#ec)"/><path d="M4 19h36M2 23.500h40M4 28h36" stroke="#eadff4" stroke-width="1.500"/><ellipse cx="22" cy="10" rx="13" ry="7" fill="#d9c7ec" opacity=".5"/></svg>
      <svg viewBox="0 0 44 44"><g transform="rotate(-8 20 22)"><path d="M4 4h33v36H4z" fill="#f5f3ee" stroke="#ccc"/><path d="M7 7h20v5H7z" fill="#66b84e"/><path d="M28 4h6v8h-6z" fill="#f2a2a2"/><path d="M7 15l22-3v11L7 37z" fill="#f6d94a"/><path d="M24 14h10v14H24z" fill="#61a8e4"/><path d="M9 20h10v8l-5 4-5-4z" fill="#4470c0"/><path d="M9 20h10v3H9z" fill="#d44"/></g><circle cx="34" cy="31" r="9" fill="#efefef" stroke="#aaa"/><path d="M33 31l2-8 1 8z" fill="#e02222"/></svg>
      <svg viewBox="0 0 44 44"><path d="M22 2l20 20-20 20L2 22z" fill="#1572b4"/><path d="M3 13q7-4 9 1c1 4-3 14 2 17s8-6 9-19c0 8-2 20 4 19 8-2 8-14 8-21q-7-6-13 0" fill="none" stroke="#a96c04" stroke-width="6.500" stroke-linecap="round"/><path d="M3 12q7-4 9 1c1 4-3 14 2 17s8-6 9-19c0 8-2 20 4 19 8-2 8-14 8-21q-7-6-13 0" fill="none" stroke="#fcba16" stroke-width="4.500" stroke-linecap="round"/></svg>
      <svg viewBox="0 0 44 44"><path d="M22 1.500l19 10v22l-19 9-19-9v-22z" fill="#1c2050" stroke="#1c2050" stroke-width="2" stroke-linejoin="round"/><path d="M22 3l17 8.500-17 8-17-8z" fill="#add6c8"/><path d="M4 13l17.500 8v19.500L4 32z" fill="#b4cdf2"/><path d="M40 13l-17.500 8v19.500L40 32z" fill="#7f9fda"/></svg>
      <svg viewBox="0 0 44 44"><path d="M5 4h34v36H5z" fill="#fbfbfb" stroke="#aebdc8"/><path d="M23 8c4 4-7 7-1 13M27 13c-5 3-1 5-3 9" fill="none" stroke="#e78124" stroke-width="2"/><path d="M14 24c4 2 12 2 15-1M16 28c4 2 8 2 11 0M17 31c3 2 6 2 9 0M12 35c6 3 15 3 20 0M29 24c6-2 5 4-1 5" fill="none" stroke="#4a7898" stroke-width="1.600"/></svg>
      <svg class="folder" viewBox="0 0 44 44"><path d="M9 3l18-1 6 5v14H9z" fill="#eee" stroke="#bbb"/><path d="M17 6h9v8h-9z" fill="#888"/><path d="M3 11h15l3 3h20v25H3z" fill="#7eb0cf"/><path d="M3 17h38v22H3z" fill="#8fbedb" stroke="#6f9fbe"/></svg>
      <svg viewBox="0 0 44 44"><path d="M13 1l14-1 8 6v15H11z" fill="#eee" stroke="#999"/><path d="M19 3l6-1 4 12h-10z" fill="#444"/><path d="M3 11h15l3 3h20v25H3z" fill="#7eb0cf"/><path d="M3 17h38v22H3z" fill="#8fbedb" stroke="#6f9fbe"/></svg>
      <svg viewBox="0 0 44 44"><path d="M2 9h40v27H2z" fill="#f0f0f2" stroke="#c5c5c5"/><path d="M4 11h36v2H4zM6 18h8M18 20h14M6 25h20" fill="#bbc" stroke="#ccd"/><circle cx="35" cy="34" r="7.500" fill="url(#ec)"/><path d="M28 34h14" stroke="#eee"/></svg>
      <svg viewBox="0 0 44 44"><path d="M7 6h30l-4 34q-11 4-22 0z" fill="#54585a"/><path d="M12 8l3 33M18 8l2 34M25 8l-1 34M32 8l-3 33M8 15h28M9 22h26M10 29h25M11 36h22" stroke="#a8abae" stroke-width=".8"/><ellipse cx="22" cy="6.500" rx="15.500" ry="4.500" fill="#ddd" stroke="#777"/><path d="M12 7l5-4 4 3 5-4 6 5-9 3z" fill="#fff"/></svg>
    </div>
  </footer>
</div>
<script src="desktop.js"></script>
</body>
</html>
```

FILE: styles.css
```css
* { box-sizing: border-box; }
body { margin: 0; font-family: "Noto Sans", "Open Sans", sans-serif; font-size: 13px; color: #111; }
.desktop { position: relative; width: 1440px; height: 900px; overflow: hidden; background: linear-gradient(#9da18f, #77807b 40%, #4b514f 96%, #8b8773); }

/* windows lying behind everything */
.back-left { position: absolute; left: 0; top: 22px; width: 40px; height: 878px; background: linear-gradient(#c5c2b0 0, #cfccb8 40px, #a5aaa5 150px, #76909c 240px, #6a8490 300px, #8d9a9a 358px, #777 359px, #eee 360px, #e4e4e4 395px, #999 395px, #eee 396px, #e6e6e6 431px, #999 431px, #fff 432px); }
.knob-ring { display: block; width: 12px; height: 12px; margin: 407px 0 0 4px; border: 2px solid #777; border-radius: 50%; }
.back-doc { position: absolute; left: 9px; top: 830px; width: 1053px; height: 70px; padding: 11px 0 0 166px; background: #fff; color: #444; font: 16px/22px "Open Sans", sans-serif; letter-spacing: -.13px; white-space: nowrap; }
.back-right { position: absolute; left: 1380px; top: 79px; width: 60px; height: 676px; padding: 60px 0 0 54px; background: linear-gradient(#eee 25px, #999 25px, #eee 26px 46px, #aaa 46px, #fff 47px 120px, #ddd 121px); overflow: hidden; display: flex; flex-direction: column; font: 11px/14px "Liberation Mono", monospace; color: #111; }
.back-right .b1 { color: #3a5fb0; height: 23px; flex: none; }
.back-right .b2 { margin-top: 60px; }
.back-right .b4 { margin-top: 14px; }

.window { position: absolute; background: #eee; border-radius: 5px 5px 0 0; box-shadow: 0 0 1px #444, 0 8px 18px rgba(0,0,0,.45); }
.titlebar { position: relative; height: 22px; border-bottom: 1px solid #a0a0a0; border-radius: 5px 5px 0 0; background: linear-gradient(#f8f8f8, #dedede); color: #777; font-size: 13px; line-height: 22px; letter-spacing: .15px; text-align: center; }
.titlebar.active { border-color: #686868; background: linear-gradient(#ebebeb, #b4b4b4); color: #333; }
.lights { position: absolute; left: 8px; top: 5px; display: flex; gap: 8px; }
.lights i { width: 12px; height: 12px; border: 1px solid #a2a2a2; border-radius: 50%; background: linear-gradient(#ddd, #f8f8f8); }
.lights.color i:nth-child(1) { border-color: #8a1a22; background: radial-gradient(circle at 50% 85%, #ff9a98, #e0202e 55%, #f4b8b8 90%); }
.lights.color i:nth-child(2) { border-color: #9a6112; background: radial-gradient(circle at 50% 85%, #ffe878, #f0a020 55%, #fae0b0 90%); }
.lights.color i:nth-child(3) { border-color: #38762a; background: radial-gradient(circle at 50% 85%, #c8f898, #5cb848 55%, #cdeec0 90%); }

.graph-window { left: 981px; top: 28px; width: 454px; height: 454px; border-radius: 5px; }
.graph-window .titlebar { padding-right: 146px; }
.graph { display: block; margin: 6px 0 0 19px; }

.applet { left: 9px; top: 22px; width: 1000px; height: 816px; border-bottom: 1px solid #888; }
.menu { display: flex; gap: 18px; height: 22px; padding-left: 9px; background: #fff; color: #000; font-size: 14px; line-height: 22px; letter-spacing: .35px; }
.canvas { position: relative; display: flex; height: 770px; padding-left: 2px; border-top: 1px solid #777; border-bottom: 2px solid #bbb; box-shadow: inset 1px 0 #aaa; }
.map { display: block; flex: none; }
.map polygon { stroke-width: 2.500; }
.speck { position: absolute; left: 405px; top: 384px; width: 3px; height: 2px; background: #aaa; border-top: 1px solid #555; border-radius: 2px 2px 0 0; }
.controls { width: 400px; flex: none; }
.toolbar { display: flex; padding: 12px 0 0 6px; }
.toolbar b { height: 29px; border: 1px solid; border-color: #fff #777 #777 #fff; box-shadow: inset 1px 1px #fff, inset -1px -1px #999; font-weight: 400; line-height: 26px; text-align: center; letter-spacing: .2px; }
.reset { width: 62px; } .stop { width: 64px; margin-left: 12px; } .go { width: 46px; margin-left: 10px; }
.panels { display: grid; grid-template-columns: 200px 200px; grid-template-rows: 258px 166px; row-gap: 11px; margin-top: 9px; }
label, .select, .push { letter-spacing: .3px; white-space: nowrap; }
label { display: block; line-height: 18px; color: #222; }
.row { display: flex; align-items: center; justify-content: space-between; height: 22px; padding: 0 6px; }
.field { height: 22px; padding-left: 4px; border: 1px solid #bbb; border-top-color: #888; box-shadow: inset 0 0 0 1px #ccc; background: #fff; font-size: 12.500px; line-height: 21px; letter-spacing: .4px; }
.w46 { width: 46px; } .w52 { width: 52px; } .w85 { width: 85px; }
.setup .row { margin-top: 5px; padding-right: 19px; }
.setup .row.second { margin-top: 15px; }
.setup .row.second label { letter-spacing: .1px; }
.collabel { height: 20px; line-height: 19px; margin: 9px 0 1px 8px; }
.collabel.first { margin-top: 31px; letter-spacing: .15px; }
.select { display: flex; justify-content: space-between; align-items: center; width: 169px; height: 20px; margin-left: 12px; padding: 0 6px 1px 12px; border: 1px solid #aaa; border-bottom-color: #777; border-radius: 4px; background: linear-gradient(#fff, #f0f0f0 60%, #fff); font-size: 12px; letter-spacing: .5px; }
.push { width: 162px; height: 20px; margin: 12px 0 0 18px; border: 1px solid #aaa; border-bottom-color: #777; border-radius: 4px; background: linear-gradient(#fff, #f0f0f0 60%, #fff); line-height: 17px; text-align: center; letter-spacing: .2px; }
.panel { border: 1px solid #000; }
h3 { margin: 0; font-size: 14px; font-weight: 700; letter-spacing: -.1px; color: #000; white-space: nowrap; }
.practical h3 { height: 34px; padding-left: 5px; line-height: 33px; }
.group { height: 61px; padding-left: 5px; }
.group label { letter-spacing: .2px; }
.group .slider { margin: 8px 0 0 14px; width: 162px; }
.slider { position: relative; height: 20px; background: linear-gradient(#777, #c8c8c8) 0 8px / 100% 5px no-repeat; }
.slider i { position: absolute; top: 2px; width: 17px; height: 17px; margin-left: -8.500px; border: 1px solid #777; border-radius: 50%; background: linear-gradient(#fff 50%, #ececec 51%, #fff); }
.row.max { height: 30px; padding: 0 6px 0 5px; }
.row.max label { letter-spacing: .15px; }
.dynamics h3 { height: 28px; padding-left: 5px; line-height: 27px; }
.dynamics .row { margin-top: 8px; padding: 0 6px 0 5px; }
.dynamics .row + .row { margin-top: 12px; }
.dynamics .row label { letter-spacing: .25px; }
.dynamics .lbl { margin: 9px 0 14px 5px; letter-spacing: 0; }
.dynamics .slider { width: 165px; margin-left: 16px; }
.fairness h3 { margin-top: 10px; padding-left: 9px; line-height: 17px; height: 18px; }
.fairness label { padding-left: 9px; letter-spacing: .15px; }
.l1 { margin-top: 8px; } .l2 { margin-top: 15px; }
.fairness .slider { width: 152px; margin: 12px 0 0 23px; }
.fairness .s2 { margin-top: 8px; }

.stats { left: 980px; top: 209px; width: 449px; height: 632px; border-radius: 5px; box-shadow: 0 0 1px #222, 0 12px 24px rgba(0,0,0,.55), 0 12px 55px rgba(0,0,0,.45); }
dl { display: grid; grid-template-columns: 208px 1fr; grid-auto-rows: 28px; column-gap: 12px; margin: 0; line-height: 28px; height: 194px; }
dt { text-align: right; font-size: 11px; letter-spacing: .2px; white-space: nowrap; }
dd { margin: 0; font-size: 12.500px; letter-spacing: .85px; }
.tbl { position: relative; width: 390px; margin-left: 26px; border: 1px solid #999; background: #fff; overflow: hidden; white-space: nowrap; }
.t1 { height: 223px; border: 1px solid #6f8fb4; }
.t2 { height: 154px; margin-top: 9px; }
.tr { display: grid; grid-template-columns: repeat(5, 75px); height: 16px; padding-left: 2px; font-size: 12.500px; line-height: 16px; letter-spacing: .85px; }
.th { width: 373px; height: 17px; background: linear-gradient(#fff 50%, #eee); font-size: 11px; line-height: 16px; letter-spacing: .15px; padding-left: 0; }
.th span { padding-left: 4px; border-right: 1px solid #ccc; }
.t1 .rows { height: 187px; width: 373px; overflow: hidden; }
.t2 .tr { grid-template-columns: repeat(5, 77px); }
.t2 .th { width: 388px; }
.hbar { width: 373px; height: 17px; border-top: 1px solid #ddd; background: #f8f8f8; }
.hbar i { display: block; width: 130px; height: 8px; margin: 4px 0 0 2px; border-radius: 4px; background: #c1c1c1; }
.vbar { position: absolute; right: 0; top: 17px; width: 15px; height: 188px; border-left: 1px solid #e4e4e4; background: #fafafa; }
.vbar i { display: block; width: 8px; height: 20px; margin: 1px 0 0 2px; border-radius: 4px; background: #c1c1c1; }

.menubar { position: absolute; left: 0; top: 0; width: 1440px; height: 22px; display: flex; align-items: center; background: linear-gradient(#fff, #f8f9ee 50%, #e0e3d2); border-bottom: 1px solid #8c8f82; color: #111; font-size: 14px; }
.apple { margin: 0 0 2px 20px; }
.menubar strong { margin-left: 18px; font-size: 14px; letter-spacing: .4px; color: #000; }
.tray { display: flex; align-items: center; position: absolute; left: 914px; top: 0; height: 21px; white-space: nowrap; }
.n3 { margin-left: 5px; }
.tm { margin-left: 12px; } .bt { margin-left: 17px; } .wf { margin-left: 15px; } .vol { margin-left: 10px; }
.pct { margin-left: 11px; font-size: 12px; letter-spacing: -.2px; }
.bat { margin-left: 4px; }
.date { margin-left: 13px; letter-spacing: .42px; }
.user { margin-left: 16px; font-weight: 600; color: #333; letter-spacing: .45px; }
.mag { margin-left: 21px; } .lst { margin-left: 15px; }

.dock { position: absolute; left: 0; top: 840px; width: 1440px; height: 60px; }
.shelf { display: block; }
.icons { position: absolute; left: 42px; top: 5px; display: flex; gap: .65px; }
.icons svg { width: 44px; height: 44px; flex: none; overflow: visible; }
.icons .folder { margin-left: 22px; }
.at { font: 20px "Liberation Serif", serif; fill: #f5e9d0; text-anchor: middle; }
.cal { font: 700 18px "Liberation Sans", sans-serif; fill: #222; text-anchor: middle; }
.jul { font: 700 6px "Liberation Sans", sans-serif; fill: #fff; }
```

FILE: desktop.js
```js
// Neighbouring districts share borders, so each one is outlined in its own colour to close hairlines.
for (const p of document.querySelectorAll('#map polygon')) p.setAttribute('stroke', p.getAttribute('fill'));

// Fitness history: each series is a list of [x, y] knots with a noise level between them.
const series = [
  { color: '#b48c00', noise: 0, pts: [[1000,121],[1009,122.500],[1035,127],[1056,133.500],[1056.500,152.500],[1062,145],[1068,141.500],[1078,141],[1128,152.500],[1128.500,171.500],[1134,163],[1148,160],[1208,171],[1208.500,190.500],[1215,181],[1223,178],[1240,179],[1310,190.500],[1310.500,209],[1317,200],[1325,196],[1335,195],[1413,205.500]] },
  { color: '#00b4b4', noise: 1.800, end: .7, pts: [[1000,130],[1009,131],[1025,133],[1040,142],[1062,141],[1072,146],[1090,159],[1110,158],[1130,165],[1145,174],[1165,172],[1210,178],[1240,179],[1310,182],[1320,188],[1360,190],[1395,193],[1413,197]] },
  { color: '#808080', noise: 0, pts: [[1000,119],[1009,122],[1070,140],[1150,160.500],[1230,178],[1310,192.500],[1413,207]] },
  { color: '#00b400', noise: 2.400, end: 1.300, pts: [[1000,100],[1009,101],[1020,106],[1030,102],[1050,106],[1064,102],[1075,109],[1100,107],[1127,117],[1145,117],[1160,124],[1190,128],[1208,124],[1225,131],[1240,134],[1270,132],[1300,137],[1320,136],[1340,137],[1358,136],[1365,128],[1375,126],[1385,133],[1413,136]] },
  { color: '#0000b4', noise: .5, end: .3, pts: [[1000,74],[1009,75],[1035,76],[1055,79],[1095,81],[1110,84],[1160,87],[1200,88],[1310,94],[1320,97],[1360,98.500],[1375,100],[1413,101]] },
  { color: '#b400b4', noise: 1.800, end: .7, pts: [[1000,67],[1009,67],[1043,70],[1055,73],[1098,71],[1103,78],[1115,75],[1135,77],[1145,83],[1180,87],[1230,88],[1300,90],[1320,89],[1370,91],[1400,90],[1413,87]] },
  { color: '#b40000', noise: 1, end: .7, pts: [[1000,67.500],[1413,67.500]] }
];
let seed = 7;
const rnd = () => (seed = (seed * 16807) % 2147483647) / 2147483647;
let out = '<rect x="1000" y="56.5" width="413.5" height="399" fill="#fff" stroke="#000"/>';
for (const s of series) {
  let d = '';
  if (!s.noise) {
    d = 'M' + s.pts.map(p => p.join(' ')).join('L');
  } else {
    let k = 0;
    for (let x = 1000; x <= 1413; x += 0.5) {
      while (k < s.pts.length - 2 && x > s.pts[k + 1][0]) k++;
      const [x0, y0] = s.pts[k], [x1, y1] = s.pts[k + 1];
      const t = (x - 1000) / 413;
      let amp = s.noise + (s.end - s.noise) * Math.min(1, t * 1.4);
      if (rnd() > .93) amp *= 2.4;
      const r = rnd() + rnd() + rnd() - 1.5;
      const y = y0 + (y1 - y0) * (x - x0) / (x1 - x0) + r * amp * 1.5;
      d += (d ? 'L' : 'M') + x + ' ' + y.toFixed(1);
    }
  }
  out += `<path d="${d}" fill="none" stroke="${s.color}" stroke-width="${s.noise ? 1.4 : 1}" shape-rendering="crispEdges"/>`;
}
document.getElementById('graph').innerHTML = out;
```
